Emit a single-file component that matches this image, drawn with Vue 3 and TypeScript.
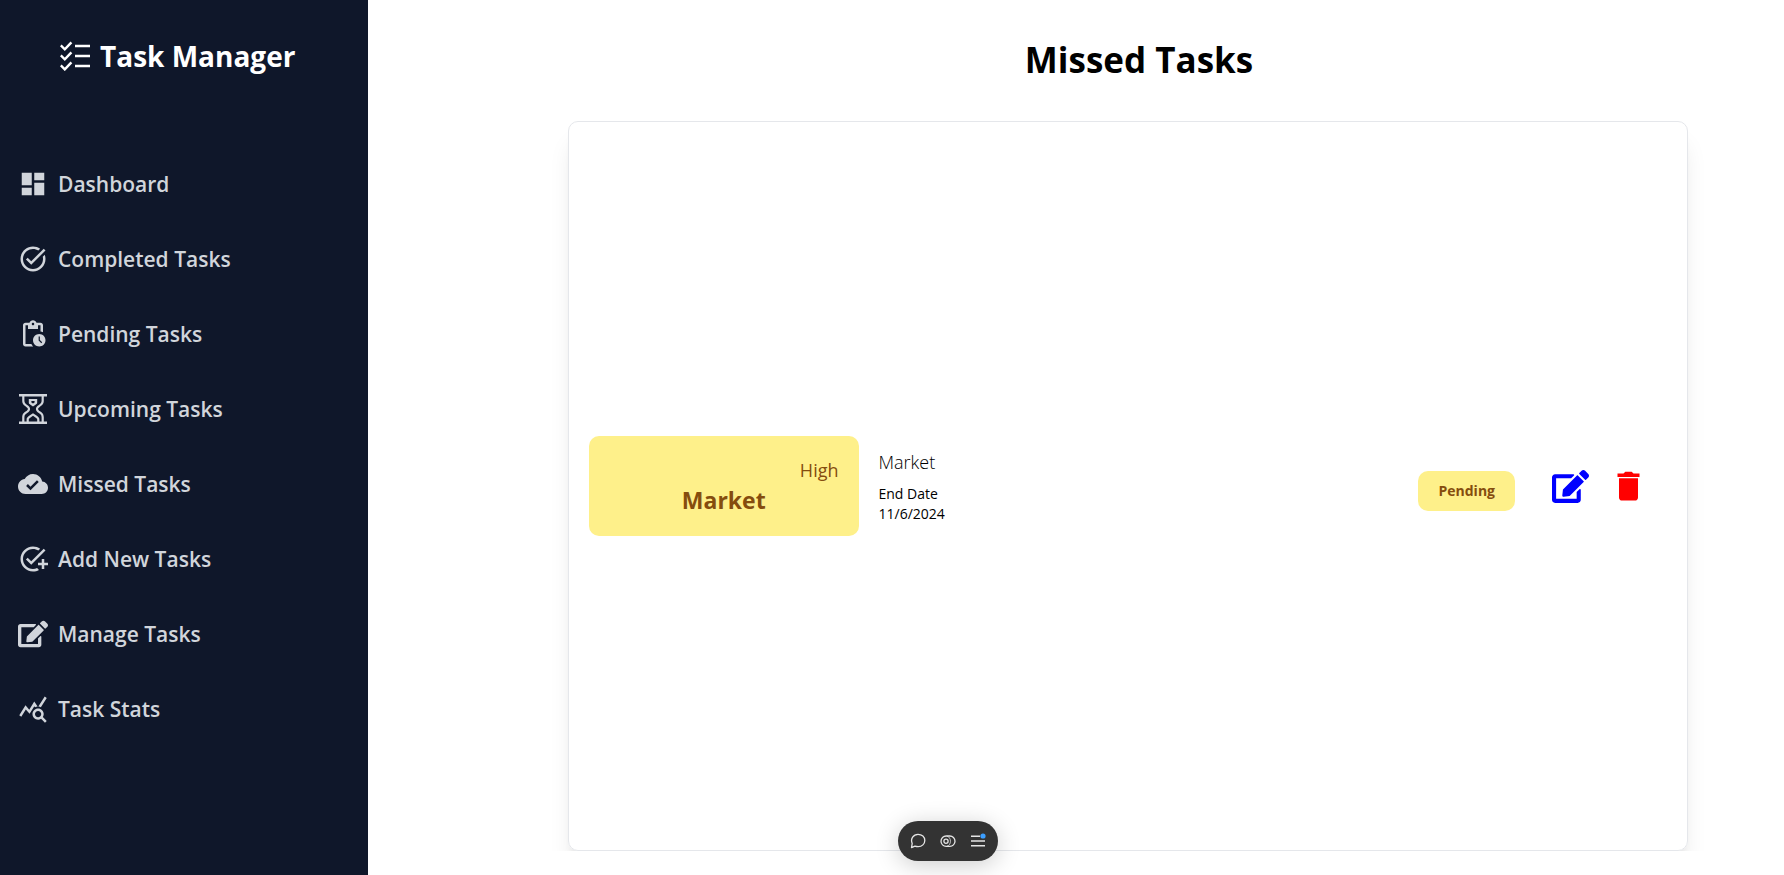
<script setup lang="ts">
interface NavItem {
  label: string
  viewBox: string
  path: string
}

const box = '0 0 24 24'
const editPath =
  'M402.6 83.2l90.2 90.2c3.8 3.8 3.8 10 0 13.8L274.4 405.6l-92.8 10.3c-12.4 1.4-22.9-9.1-21.5-21.5l10.3-92.8L388.8 83.2c3.8-3.8 10-3.8 13.8 0zm162-22.9l-48.8-48.8c-15.2-15.2-39.9-15.2-55.2 0l-35.4 35.4c-3.8 3.8-3.8 10 0 13.8l90.2 90.2c3.8 3.8 10 3.8 13.8 0l35.4-35.4c15.2-15.3 15.2-40 0-55.2zM384 346.2V448H64V128h229.8c3.2 0 6.2-1.3 8.5-3.5l40-40c7.6-7.6 2.2-20.5-8.5-20.5H48C21.5 64 0 85.5 0 112v352c0 26.5 21.5 48 48 48h352c26.5 0 48-21.5 48-48V306.2c0-10.7-12.9-16-20.5-8.5l-40 40c-2.2 2.3-3.5 5.3-3.5 8.5z'

const navItems: NavItem[] = [
  {
    label: 'Dashboard',
    viewBox: box,
    path: 'M3 13h8V3H3v10zm0 8h8v-6H3v6zm10 0h8V11h-8v10zm0-18v6h8V3h-8z',
  },
  {
    label: 'Completed Tasks',
    viewBox: box,
    path: 'M22 5.18L10.59 16.6l-4.24-4.24 1.41-1.41 2.83 2.83 10-10L22 5.18zM19.79 10.22c.13.57.21 1.17.21 1.78 0 4.42-3.58 8-8 8s-8-3.58-8-8 3.58-8 8-8c1.58 0 3.04.46 4.28 1.25l1.44-1.44C16.1 2.67 14.13 2 12 2 6.48 2 2 6.48 2 12s4.48 10 10 10 10-4.48 10-10c0-1.19-.22-2.33-.6-3.39l-1.61 1.61z',
  },
  {
    label: 'Pending Tasks',
    viewBox: box,
    path: 'M17 12c-2.76 0-5 2.24-5 5s2.24 5 5 5 5-2.24 5-5-2.24-5-5-5zm1.65 7.35L16.5 17.2V14h1v2.79l1.85 1.85-.7.71zM18 3h-3.18C14.4 1.84 13.3 1 12 1s-2.4.84-2.82 2H6c-1.1 0-2 .9-2 2v15c0 1.1.9 2 2 2h6.11c-.59-.57-1.07-1.25-1.42-2H6V5h2v3h8V5h2v5.08c.71.1 1.38.31 2 .6V5c0-1.1-.9-2-2-2zm-6 2c-.55 0-1-.45-1-1s.45-1 1-1 1 .45 1 1-.45 1-1 1z',
  },
  {
    label: 'Upcoming Tasks',
    viewBox: '0 0 30 30',
    path: 'M1 0h28v2.4h-3.2v4.2c0 3.5-1.6 4.6-3.8 6.1-1.3.9-1.9 1.5-1.9 2.3s.6 1.4 1.9 2.3c2.2 1.5 3.8 2.6 3.8 6.1v4.2H29V30H1v-2.4h3.2v-4.2c0-3.5 1.6-4.6 3.8-6.1 1.3-.9 1.9-1.5 1.9-2.3s-.6-1.4-1.9-2.3c-2.2-1.5-3.8-2.6-3.8-6.1V2.4H1zM6.4 2.4v4.2c0 2.3.9 3 2.8 4.3 1.6 1.1 2.9 2.2 2.9 4.1s-1.3 3-2.9 4.1c-1.9 1.3-2.8 2-2.8 4.3v4.2h2.2v-2.2c0-1.5.9-2.5 2.9-3.9l3.5-2.2 3.5 2.2c2 1.4 2.9 2.4 2.9 3.9v2.2h2.2v-4.2c0-2.3-.9-3-2.8-4.3-1.6-1.1-2.9-2.2-2.9-4.1s1.3-3 2.9-4.1c1.9-1.3 2.8-2 2.8-4.3V2.4zM10.8 5h8.4v3.6c0 1-.5 1.5-1.3 2L15 12.6l-2.9-2c-.8-.5-1.3-1-1.3-2zm2.6 2v1.5l1.6 1.1 1.6-1.1V7zM10.8 27.6h8.4v-2c0-1-.8-1.5-1.8-2.2L15 21.8l-2.4 1.6c-1 .7-1.8 1.2-1.8 2.2z',
  },
  {
    label: 'Missed Tasks',
    viewBox: box,
    path: 'M19.35 10.04C18.67 6.59 15.64 4 12 4 9.11 4 6.6 5.64 5.35 8.04 2.34 8.36 0 10.91 0 14c0 3.31 2.69 6 6 6h13c2.76 0 5-2.24 5-5 0-2.64-2.05-4.78-4.65-4.96zM10 17l-3.5-3.5 1.41-1.41L10 14.17 15.18 9l1.41 1.41L10 17z',
  },
  {
    label: 'Add New Tasks',
    viewBox: box,
    path: 'M22 5.18L10.59 16.6l-4.24-4.24 1.41-1.41 2.83 2.83 10-10L22 5.18zM12 20c-4.41 0-8-3.59-8-8s3.59-8 8-8c1.57 0 3.04.46 4.28 1.25l1.45-1.45C16.1 2.67 14.13 2 12 2 6.48 2 2 6.48 2 12s4.48 10 10 10c1.73 0 3.36-.44 4.78-1.22l-1.5-1.5c-1 .46-2.11.72-3.28.72zm7-5h-3v2h3v3h2v-3h3v-2h-3v-3h-2v3z',
  },
  { label: 'Manage Tasks', viewBox: '0 0 576 512', path: editPath },
  {
    label: 'Task Stats',
    viewBox: box,
    path: 'M19.88 18.47c.44-.7.7-1.51.7-2.39 0-2.49-2.01-4.5-4.5-4.5s-4.5 2.01-4.5 4.5 2.01 4.5 4.49 4.5c.88 0 1.7-.26 2.39-.7L21.58 23 23 21.58l-3.12-3.11zm-3.8.11c-1.38 0-2.5-1.12-2.5-2.5s1.12-2.5 2.5-2.5 2.5 1.12 2.5 2.5-1.12 2.5-2.5 2.5zm-.36-8.5c-.74.02-1.45.18-2.1.45l-.55-.83-3.8 6.18-3.01-3.52-3.63 5.81L1 17l5-8 3 3.5L13 6l2.72 4.08zm2.59.5c-.64-.28-1.33-.45-2.05-.49L21.38 2 23 3.18l-4.69 7.4z',
  },
]

const tasks = [
  { title: 'Market', priority: 'High', description: 'Market', endDate: '11/6/2024', status: 'Pending' },
]
</script>

<template>
  <div class="layout">
    <aside class="sidebar">
      <div class="brand">
        <svg class="brand-icon" viewBox="0 0 30 30" fill="none" stroke="currentColor" stroke-width="2.4" aria-hidden="true">
          <path d="M.8 4.4l4 4L11.4 1.400M.8 14.400l4 4 6.600-7M.8 24.400l4 4 6.600-7M15 5h15M15 15h15M15 25h15" />
        </svg>
        <span>Task Manager</span>
      </div>
      <nav class="nav">
        <a v-for="item in navItems" :key="item.label" class="nav-link" href="#">
          <svg class="nav-icon" :viewBox="item.viewBox" fill="currentColor" fill-rule="evenodd" aria-hidden="true">
            <path :d="item.path" />
          </svg>
          <span>{{ item.label }}</span>
        </a>
      </nav>
    </aside>

    <main class="main">
      <h1 class="page-title">Missed Tasks</h1>
      <div class="board-clip">
        <section class="board">
          <article v-for="task in tasks" :key="task.title" class="task">
            <div class="task-card">
              <span class="priority">{{ task.priority }}</span>
              <h2 class="task-title">{{ task.title }}</h2>
            </div>
            <div class="details">
              <p class="description">{{ task.description }}</p>
              <p class="date">End Date</p>
              <p class="date">{{ task.endDate }}</p>
            </div>
            <span class="status">{{ task.status }}</span>
            <div class="actions">
              <button class="action edit" type="button" aria-label="Edit task">
                <svg viewBox="0 0 576 512" fill="currentColor"><path :d="editPath" /></svg>
              </button>
              <button class="action delete" type="button" aria-label="Delete task">
                <svg viewBox="0 0 37 37" fill="currentColor">
                  <path d="M7.500 5.500h6l1.800-1.700h6.400l1.800 1.700h6V9h-22zM9 10.200h19v19.200c0 2-1.300 3.200-3.100 3.200H12.100c-1.800 0-3.100-1.200-3.100-3.200z" />
                </svg>
              </button>
            </div>
          </article>
        </section>
      </div>
    </main>

    <div class="toolbar" role="toolbar" aria-label="Page tools">
      <button class="tool" type="button" aria-label="Comment">
        <svg viewBox="0 0 16 16" fill="none" stroke="currentColor" stroke-width="1.3" stroke-linejoin="round">
          <path d="M1.500 14.600l.7-4.200C.2 5.800 3.400 1.300 8 1.300c4 0 6.800 2.700 6.800 6.200S12 13.600 8.200 13.600c-1.500 0-2.400-.2-3.300-.5z" />
        </svg>
      </button>
      <button class="tool" type="button" aria-label="Preview">
        <svg viewBox="0 0 16 16" fill="none" stroke="currentColor" stroke-width="1.3">
          <rect x="1" y="3" width="14" height="10.4" rx="5.2" />
          <circle cx="6" cy="8.2" r="2.1" />
          <path d="M7 3.200c4.600 1 4.600 9 0 10" stroke-width=".8" />
        </svg>
      </button>
      <button class="tool" type="button" aria-label="Menu">
        <svg viewBox="0 0 16 16" fill="none" stroke="currentColor" stroke-width="1.4">
          <path d="M1 3.200h9M1 8h14M1 12.800h14" />
          <circle cx="13" cy="3" r="2.600" fill="#3b9eff" stroke="none" />
        </svg>
      </button>
    </div>
  </div>
</template>

<style>
body {
  margin: 0;
  background: #fff;
}
</style>

<style scoped>
.layout {
  display: flex;
  min-height: 100vh;
  font-family: "Open Sans", "Noto Sans", sans-serif;
  color: #000;
}

.sidebar {
  box-sizing: border-box;
  flex: none;
  width: 368px;
  background: #0f172a;
}

.brand {
  display: flex;
  align-items: center;
  gap: 10px;
  padding: 36px 60px 0;
  font-size: 28px;
  line-height: 40px;
  font-weight: 700;
  white-space: nowrap;
  color: #fff;
}

.brand-icon {
  flex: none;
  width: 30px;
  height: 30px;
}

.nav {
  display: flex;
  flex-direction: column;
  gap: 35px;
  padding: 88px 18px 40px;
}

.nav-link {
  display: flex;
  align-items: center;
  gap: 10px;
  font-size: 21px;
  line-height: 40px;
  font-weight: 600;
  color: #d1d5db;
  text-decoration: none;
}

.nav-icon {
  flex: none;
  width: 30px;
  height: 30px;
}

.main {
  display: flex;
  flex: 1;
  flex-direction: column;
  min-width: 0;
  padding-bottom: 24px;
}

.page-title {
  margin: 0;
  padding: 36px 0 37px 126px;
  font-size: 35px;
  line-height: 48px;
  font-weight: 700;
  text-align: center;
}

.board-clip {
  display: flex;
  flex: 1;
  overflow: hidden;
  padding: 0 96px 0 200px;
}

.board {
  box-sizing: border-box;
  display: flex;
  flex: 1;
  flex-direction: column;
  justify-content: center;
  min-width: 0;
  padding: 20px;
  border: 1px solid #e5e7eb;
  border-radius: 10px;
  box-shadow: 0 20px 25px -5px rgb(0 0 0 / 10%), 0 8px 10px -6px rgb(0 0 0 / 10%);
}

.task {
  display: flex;
  align-items: center;
}

.task-card {
  box-sizing: border-box;
  flex: none;
  width: 25%;
  padding: 20px;
  border-radius: 10px;
  background: #fef08a;
  color: #854d0e;
}

.priority {
  display: block;
  font-size: 18px;
  line-height: 28px;
  text-align: right;
}

.task-title {
  margin: 0;
  font-size: 23px;
  line-height: 32px;
  font-weight: 700;
  text-align: center;
}

.details {
  flex: 1;
  padding-left: 20px;
}

.description,
.date {
  margin: 0;
}

.description {
  padding-bottom: 8px;
  font-size: 18px;
  line-height: 28px;
  font-weight: 300;
}

.date {
  font-size: 14px;
  line-height: 20px;
  font-weight: 500;
}

.status {
  margin-top: 10px;
  padding: 0 20px;
  border-radius: 10px;
  background: #fef08a;
  font-size: 14px;
  line-height: 40px;
  font-weight: 700;
  color: #854d0e;
}

.actions {
  display: flex;
  gap: 21px;
  padding: 0 20px 0 37px;
}

.action,
.tool {
  display: flex;
  padding: 0;
  border: 0;
  background: none;
  color: inherit;
  cursor: pointer;
}

.action svg {
  width: 37px;
  height: 37px;
}

.edit {
  color: #00f;
}

.delete {
  color: #f00;
}

.toolbar {
  position: fixed;
  bottom: 14px;
  left: calc(50% + 56px);
  display: flex;
  gap: 14px;
  padding: 12px;
  border-radius: 20px;
  background: #333;
  box-shadow: 0 4px 24px rgb(0 0 0 / 20%);
  color: #e5e5e5;
  transform: translateX(-50%);
}

.tool svg {
  width: 16px;
  height: 16px;
}
</style>
